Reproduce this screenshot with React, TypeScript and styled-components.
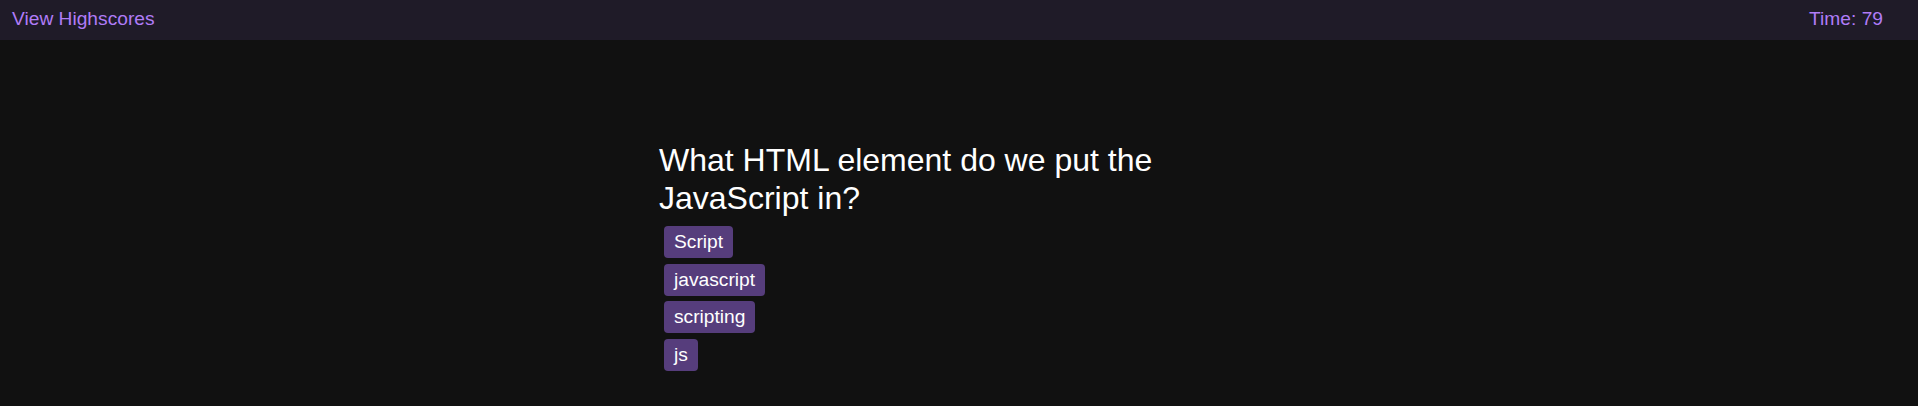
import React from "react";
import styled, { createGlobalStyle } from "styled-components";

const GlobalStyle = createGlobalStyle`
  html, body {
    margin: 0;
    padding: 0;
    background: #111111;
    font-family: "Liberation Sans", Arial, sans-serif;
    font-size: 19.2px;
    color: #ffffff;
  }
  #root {
    min-height: 406px;
  }
`;

const Header = styled.header`
  display: flex;
  align-items: center;
  justify-content: space-between;
  height: 40px;
  padding: 0 35px 0 12px;
  background: #1f1b28;
  color: #b07cf7;
`;

const HeaderLink = styled.a`
  color: inherit;
  text-decoration: none;
  cursor: pointer;
  margin-top: -3px;
`;

const Timer = styled.span`
  margin-top: -3px;
`;

const Main = styled.main`
  width: 600px;
  margin: 101px auto 0;
`;

const Question = styled.h2`
  margin: 0 0 3px;
  font-size: 32px;
  font-weight: 400;
  line-height: 38.4px;
`;

const Answers = styled.div`
  display: flex;
  flex-direction: column;
  align-items: flex-start;
  gap: 5.8px;
  padding: 5px;
`;

const AnswerButton = styled.button`
  height: 32px;
  padding: 0 10px;
  border: 0;
  border-radius: 4px;
  background: #563d7c;
  color: #ffffff;
  font-family: inherit;
  font-size: 19.2px;
  cursor: pointer;
`;

const answers = ["Script", "javascript", "scripting", "js"];

function App() {
  return (
    <>
      <GlobalStyle />
      <Header>
        <HeaderLink>View Highscores</HeaderLink>
        <Timer>Time: 79</Timer>
      </Header>
      <Main>
        <Question>What HTML element do we put the JavaScript in?</Question>
        <Answers>
          {answers.map((a) => (
            <AnswerButton key={a}>{a}</AnswerButton>
          ))}
        </Answers>
      </Main>
    </>
  );
}

export default App;
